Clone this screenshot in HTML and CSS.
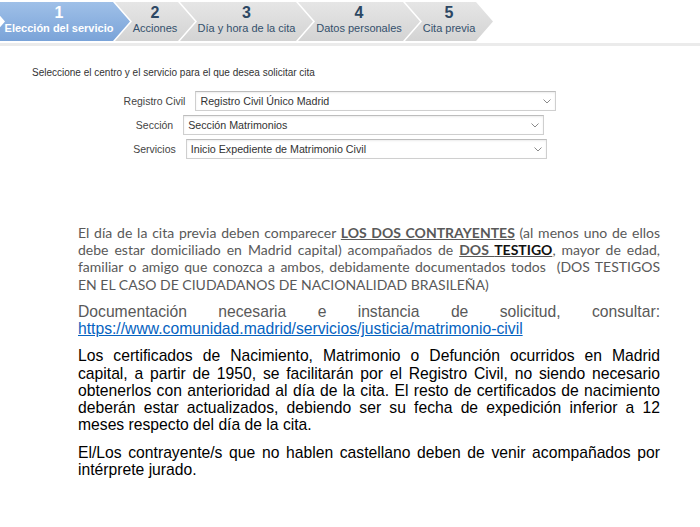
FILE: index.html
```html
<!DOCTYPE html>
<html lang="es">
<head>
<meta charset="utf-8">
<title>Cita previa - Elección del servicio</title>
<link rel="stylesheet" href="styles.css">
</head>
<body>
<nav class="steps">
  <div class="step step-active step-1"><span class="num">1</span><span class="lbl">Elección del servicio</span></div>
  <div class="step step-2"><span class="num">2</span><span class="lbl">Acciones</span></div>
  <div class="step step-3"><span class="num">3</span><span class="lbl">Día y hora de la cita</span></div>
  <div class="step step-4"><span class="num">4</span><span class="lbl">Datos personales</span></div>
  <div class="step step-5"><span class="num">5</span><span class="lbl">Cita previa</span></div>
</nav>
<div class="rule"></div>
<main class="content">
  <p class="intro">Seleccione el centro y el servicio para el que desea solicitar cita</p>
  <div class="form">
    <div class="row">
      <label class="lab" for="s1">Registro Civil</label>
      <div class="select-wrap">
        <select id="s1" class="sel"><option>Registro Civil Único Madrid</option></select>
        <svg class="caret" width="8" height="5" viewBox="0 0 8 5"><path d="M0.5 0.5 L4 4 L7.5 0.5" fill="none" stroke="#8a8a8a" stroke-width="1"/></svg>
      </div>
    </div>
    <div class="row">
      <label class="lab" for="s2">Sección</label>
      <div class="select-wrap">
        <select id="s2" class="sel"><option>Sección Matrimonios</option></select>
        <svg class="caret" width="8" height="5" viewBox="0 0 8 5"><path d="M0.5 0.5 L4 4 L7.5 0.5" fill="none" stroke="#8a8a8a" stroke-width="1"/></svg>
      </div>
    </div>
    <div class="row">
      <label class="lab" for="s3">Servicios</label>
      <div class="select-wrap">
        <select id="s3" class="sel"><option>Inicio Expediente de Matrimonio Civil</option></select>
        <svg class="caret" width="8" height="5" viewBox="0 0 8 5"><path d="M0.5 0.5 L4 4 L7.5 0.5" fill="none" stroke="#8a8a8a" stroke-width="1"/></svg>
      </div>
    </div>
  </div>
  <section class="info">
    <p class="p-grey">El día de la cita previa deben comparecer <b class="u">LOS DOS CONTRAYENTES</b> (al menos uno de ellos debe estar domiciliado en Madrid capital) acompañados de <b class="u">DOS <span class="dark">TESTIGO</span></b>, mayor de edad, familiar o amigo que conozca a ambos, debidamente documentados todos &nbsp;(DOS TESTIGOS EN EL CASO DE CIUDADANOS DE NACIONALIDAD BRASILEÑA)</p>
    <p class="p-arial p-doc">Documentación necesaria e instancia de solicitud, consultar: <a class="link" href="#">https://www.comunidad.madrid/servicios/justicia/matrimonio-civil</a></p>
    <p class="p-arial">Los certificados de Nacimiento, Matrimonio o Defunción ocurridos en Madrid capital, a partir de 1950, se facilitarán por el Registro Civil, no siendo necesario obtenerlos con anterioridad al día de la cita. El resto de certificados de nacimiento deberán estar actualizados, debiendo ser su fecha de expedición inferior a 12 meses respecto del día de la cita.</p>
    <p class="p-arial">El/Los contrayente/s que no hablen castellano deben de venir acompañados por intérprete jurado.</p>
  </section>
</main>
</body>
</html>
```
FILE: styles.css
```css
html, body {
  margin: 0;
  padding: 0;
  background: #ffffff;
}
body {
  font-family: "Liberation Sans", Arial, sans-serif;
  color: #333333;
  width: 700px;
}

/* Step bar */
.steps {
  display: flex;
  height: 39px;
  margin-top: 2px;
  overflow: hidden;
}
.step {
  flex: none;
  box-sizing: border-box;
  display: flex;
  flex-direction: column;
  align-items: center;
  padding: 2px 17px 0;
  margin-left: -15px;
  background: linear-gradient(#e6e6e6, #d3d3d3);
  clip-path: polygon(0 0, calc(100% - 17px) 0, 100% 50%, calc(100% - 17px) 100%, 0 100%, 17px 50%);
  color: #34506c;
  white-space: nowrap;
}
.step-active {
  background: linear-gradient(#9fc0e8, #7aa3d8);
  color: #ffffff;
}
.step-1 { width: 142px; margin-left: -12px; }
.step-2 { width: 80px; }
.step-3 { width: 133px; }
.step-4 { width: 122px; }
.step-5 { width: 88px; }
.num {
  font-size: 16px;
  font-weight: bold;
  line-height: 17px;
  color: #2c4763;
}
.lbl {
  font-size: 11px;
  line-height: 15px;
}
.step-active .num,
.step-active .lbl {
  color: #ffffff;
  font-weight: bold;
}
.rule {
  height: 3px;
  margin-top: 2px;
  background: #ebebeb;
}

/* Form */
.intro {
  margin: 21px 0 0 32px;
  font-size: 10px;
  line-height: 12px;
  color: #333333;
}
.form {
  width: 680px;
  margin-top: 12px;
  display: flex;
  flex-direction: column;
  align-items: center;
  gap: 4px;
}
.row {
  display: flex;
  align-items: center;
  gap: 10px;
}
.lab {
  font-size: 10.5px;
  color: #444444;
}
.select-wrap {
  position: relative;
  width: 361px;
  height: 20px;
}
.sel {
  appearance: none;
  -webkit-appearance: none;
  box-sizing: border-box;
  width: 100%;
  height: 100%;
  margin: 0;
  padding: 0 16px 0 4px;
  border: 1px solid #cfcfcf;
  border-top-color: #bdbdbd;
  border-radius: 0;
  box-shadow: inset 0 1px 2px rgba(0, 0, 0, 0.08);
  background: #ffffff;
  font-family: "Liberation Sans", Arial, sans-serif;
  font-size: 10.7px;
  color: #333333;
}
.caret {
  position: absolute;
  right: 5px;
  top: 8px;
}

/* Info text */
.info {
  margin: 65px 0 0 78px;
  width: 582px;
}
.info p {
  margin: 0 0 10px;
  text-align: justify;
}
.p-grey {
  font-family: Lato, "Open Sans", sans-serif;
  font-size: 14px;
  line-height: 17.2px;
  color: #595959;
}
.u {
  text-decoration: underline;
  font-weight: bold;
}
.dark {
  color: #111111;
}
.p-arial {
  font-family: "Liberation Sans", Arial, sans-serif;
  font-size: 15.7px;
  line-height: 17.25px;
  color: #000000;
}
.p-doc {
  color: #595959;
}
.link {
  color: #0563c1;
  text-decoration: underline;
}
```
